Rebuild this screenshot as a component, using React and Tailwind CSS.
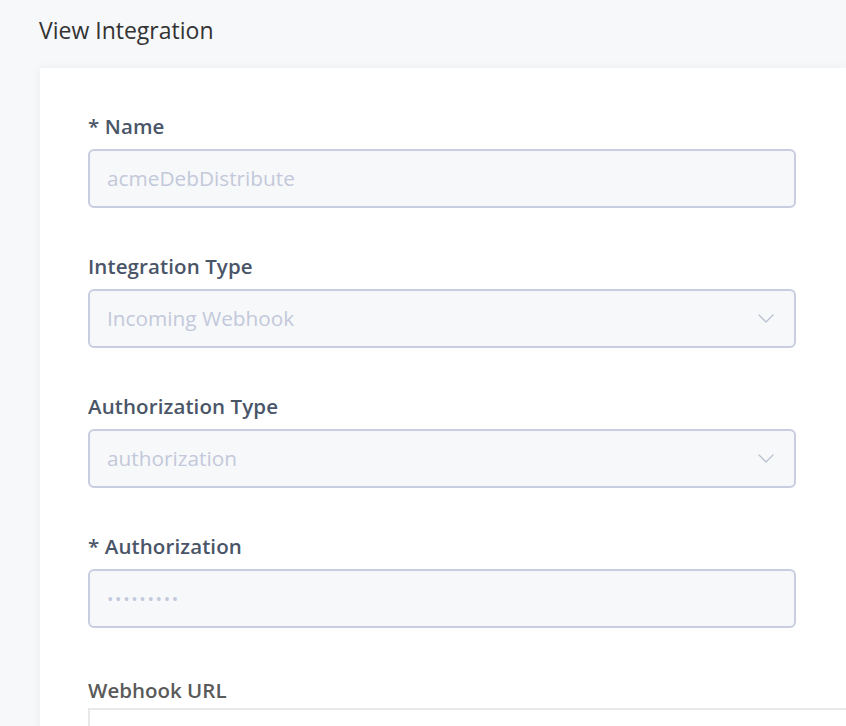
export default function App() {
  const font = { fontFamily: '"Open Sans", "Liberation Sans", sans-serif' };
  const Chevron = () => (
    <svg width="16" height="9" viewBox="0 0 16 9" fill="none" className="shrink-0">
      <path d="M1 1l7 7 7-7" stroke="#b9c0d0" strokeWidth="1.3" strokeLinecap="round" strokeLinejoin="round" />
    </svg>
  );
  const Field = ({ label, value, select, dots }) => (
    <div className="flex flex-col">
      <div className="text-[20.5px] leading-[27px] font-semibold text-[#4a5568] h-[27px] tracking-[0.1px]">{label}</div>
      <div className="mt-[9px] w-[708px] h-[59px] rounded-[6px] border-2 border-[#c8cee0] bg-[#f7f8fa] flex items-center justify-between pl-[17px] pr-[20px]">
        {dots ? (
          <span className="text-[17px] tracking-[1.7px] text-[#c3c9da]">•••••••••</span>
        ) : (
          <span className="text-[20.8px] text-[#c3c9da]">{value}</span>
        )}
        {select && <Chevron />}
      </div>
    </div>
  );
  return (
    <div style={font} className="w-full h-[726px] overflow-hidden bg-[#f7f8fa]">
      <div className="pl-[39px] pt-[15px] text-[23px] leading-[30px] text-[#333]">View Integration</div>
      <div className="ml-[40px] mt-[23px] bg-white h-[700px] shadow-[0_0_10px_rgba(0,0,0,0.05)] pl-[48px] pt-[45px] overflow-hidden">
        <div className="flex flex-col gap-[45px]">
          <Field label="* Name" value="acmeDebDistribute" />
          <Field label="Integration Type" value="Incoming Webhook" select />
          <Field label="Authorization Type" value="authorization" select />
          <Field label="* Authorization" dots />
        </div>
        <div className="mt-[48px] text-[20.5px] leading-[28px] font-semibold text-[#5a5a5a]">Webhook URL</div>
        <div className="mt-[4px] w-[900px] h-[60px] border-2 border-[#e8e8e8] bg-white"></div>
      </div>
    </div>
  );
}
